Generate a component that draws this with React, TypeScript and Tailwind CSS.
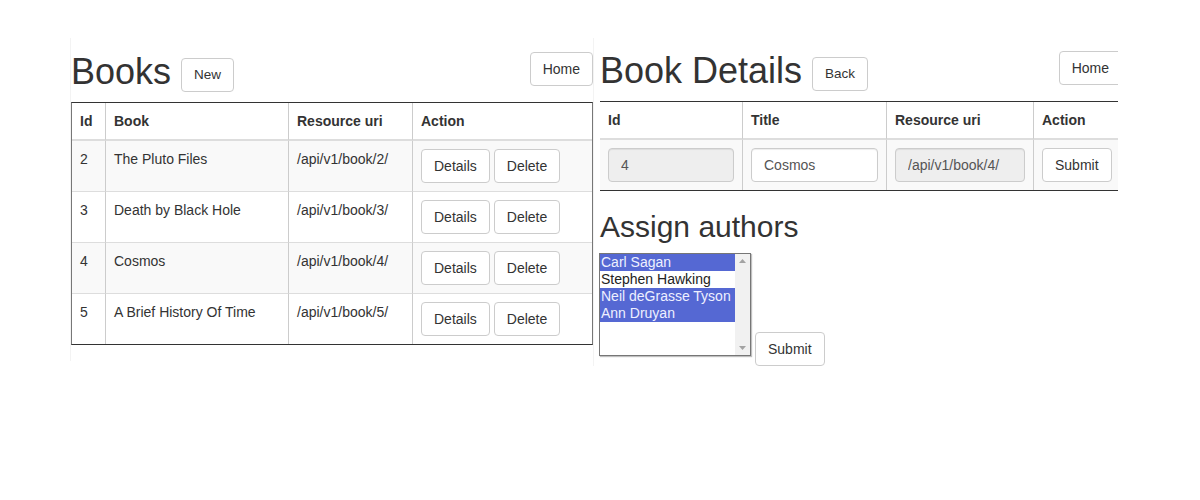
import React from "react";

const books = [
  { id: 2, title: "The Pluto Files" },
  { id: 3, title: "Death by Black Hole" },
  { id: 4, title: "Cosmos" },
  { id: 5, title: "A Brief History Of Time" },
];

const authors = [
  { name: "Carl Sagan", selected: true },
  { name: "Stephen Hawking", selected: false },
  { name: "Neil deGrasse Tyson", selected: true },
  { name: "Ann Druyan", selected: true },
];

function Btn({
  children,
  small,
  className = "",
}: {
  children: React.ReactNode;
  small?: boolean;
  className?: string;
}) {
  const size = small ? "h-[34px] px-[12px] text-[13.5px]" : "py-[6px] px-[12px] text-[14px]";
  return (
    <button className={`rounded-[4px] border border-[#ccc] bg-white text-[#333] leading-[20px] ${size} ${className}`}>
      {children}
    </button>
  );
}

function Input({ value, disabled }: { value: string; disabled?: boolean }) {
  return (
    <input
      readOnly
      value={value}
      disabled={disabled}
      className={`block h-[34px] w-full rounded-[4px] border border-[#ccc] px-[12px] text-[14px] text-[#555] shadow-[inset_0_1px_1px_rgba(0,0,0,0.075)] ${
        disabled ? "bg-[#eee]" : "bg-white"
      }`}
    />
  );
}

function BooksPanel() {
  return (
    <div className="w-[523px] border-l border-[#f3f3f3] pt-[14px] pb-[16px]">
      <div className="flex items-start justify-between">
        <div className="flex items-start">
          <h1 className="text-[36px] leading-[40px] font-normal">Books</h1>
          <Btn small className="ml-[10px] mt-[6px]">New</Btn>
        </div>
        <Btn>Home</Btn>
      </div>

      {/* book list */}
      <div className="mt-[10px] w-[522px] border-y border-y-[#333] border-x border-x-[#777]">
        <table className="w-[520px] table-fixed border-separate border-spacing-0 text-[14px] leading-[20px]">
          <thead>
            <tr>
              <th className="w-[34px] border-r border-b-2 border-r-[#ccc] border-b-[#ddd] p-[8px] text-left font-bold">Id</th>
              <th className="w-[183px] border-r border-b-2 border-r-[#ccc] border-b-[#ddd] p-[8px] text-left font-bold">Book</th>
              <th className="w-[124px] border-r border-b-2 border-r-[#ccc] border-b-[#ddd] p-[8px] text-left font-bold">Resource uri</th>
              <th className="border-b-2 border-b-[#ddd] p-[8px] text-left font-bold">Action</th>
            </tr>
          </thead>
          <tbody>
            {books.map((b, i) => {
              const last = i === books.length - 1;
              const row = `${i % 2 === 0 ? "bg-[#f9f9f9]" : "bg-white"} ${last ? "" : "border-b border-b-[#ddd]"} p-[8px] align-top`;
              return (
                <tr key={b.id}>
                  <td className={`${row} border-r border-r-[#ccc]`}>{b.id}</td>
                  <td className={`${row} border-r border-r-[#ccc]`}>{b.title}</td>
                  <td className={`${row} border-r border-r-[#ccc]`}>/api/v1/book/{b.id}/</td>
                  <td className={row}>
                    <div className="flex gap-[4px]">
                      <Btn>Details</Btn>
                      <Btn>Delete</Btn>
                    </div>
                  </td>
                </tr>
              );
            })}
          </tbody>
        </table>
      </div>
    </div>
  );
}

function DetailsPanel() {
  return (
    <div className="w-[525px] overflow-hidden border-l border-[#f3f3f3] pl-[6px] pt-[13px]">
      <div className="w-[522px]">
        <div className="flex items-start justify-between">
          <div className="flex items-start">
            <h1 className="text-[36px] leading-[40px] font-normal">Book Details</h1>
            <Btn small className="ml-[10px] mt-[6px]">Back</Btn>
          </div>
          <Btn>Home</Btn>
        </div>

        <div className="mt-[10px] border-y border-[#333]">
          <table className="w-[522px] table-fixed border-separate border-spacing-0 text-[14px] leading-[20px]">
            <thead>
              <tr>
                <th className="w-[143px] border-r border-b-2 border-r-[#ccc] border-b-[#ddd] p-[8px] text-left font-bold">Id</th>
                <th className="w-[144px] border-r border-b-2 border-r-[#ccc] border-b-[#ddd] p-[8px] text-left font-bold">Title</th>
                <th className="w-[147px] border-r border-b-2 border-r-[#ccc] border-b-[#ddd] p-[8px] text-left font-bold">Resource uri</th>
                <th className="border-b-2 border-b-[#ddd] p-[8px] text-left font-bold">Action</th>
              </tr>
            </thead>
            <tbody>
              <tr className="bg-[#f9f9f9]">
                <td className="border-r border-r-[#ccc] p-[8px]">
                  <Input value="4" disabled />
                </td>
                <td className="border-r border-r-[#ccc] p-[8px]">
                  <Input value="Cosmos" />
                </td>
                <td className="border-r border-r-[#ccc] p-[8px]">
                  <Input value="/api/v1/book/4/" disabled />
                </td>
                <td className="p-[8px]">
                  <Btn>Submit</Btn>
                </td>
              </tr>
            </tbody>
          </table>
        </div>

        <h2 className="mt-[19px] mb-[10px] text-[30px] leading-[33px] font-normal">Assign authors</h2>

        {/* author picker, drawn as a multi-select listbox */}
        <div className="flex items-start">
          <div className="-ml-px flex h-[103px] w-[152px] border border-[#767676] bg-white shadow-[1px_1px_1px_rgba(0,0,0,0.25)]">
            <div className="flex-1 overflow-hidden text-[14px] leading-[17px]">
              {authors.map((a) => (
                <div
                  key={a.name}
                  className={`whitespace-nowrap pl-[1px] ${a.selected ? "bg-[#5568d3] text-[#eef0ff]" : "text-[#222]"}`}
                >
                  {a.name}
                </div>
              ))}
            </div>
            <div className="flex w-[15px] flex-col items-center justify-between bg-[#f1f1f1] py-[5px]">
              <svg width="7" height="4" viewBox="0 0 7 4">
                <path d="M0 4 L3.5 0 L7 4 Z" fill="#a3a3a3" />
              </svg>
              <svg width="7" height="4" viewBox="0 0 7 4">
                <path d="M0 0 L3.5 4 L7 0 Z" fill="#a3a3a3" />
              </svg>
            </div>
          </div>
          <Btn className="ml-[4px] mt-[79px]">Submit</Btn>
        </div>
      </div>
    </div>
  );
}

export default function App() {
  return (
    <div className="min-h-[500px] bg-white pl-[70px] pt-[38px] text-[#333] font-['Liberation_Sans',Arial,sans-serif]">
      <div className="flex items-start">
        <BooksPanel />
        <DetailsPanel />
      </div>
    </div>
  );
}
